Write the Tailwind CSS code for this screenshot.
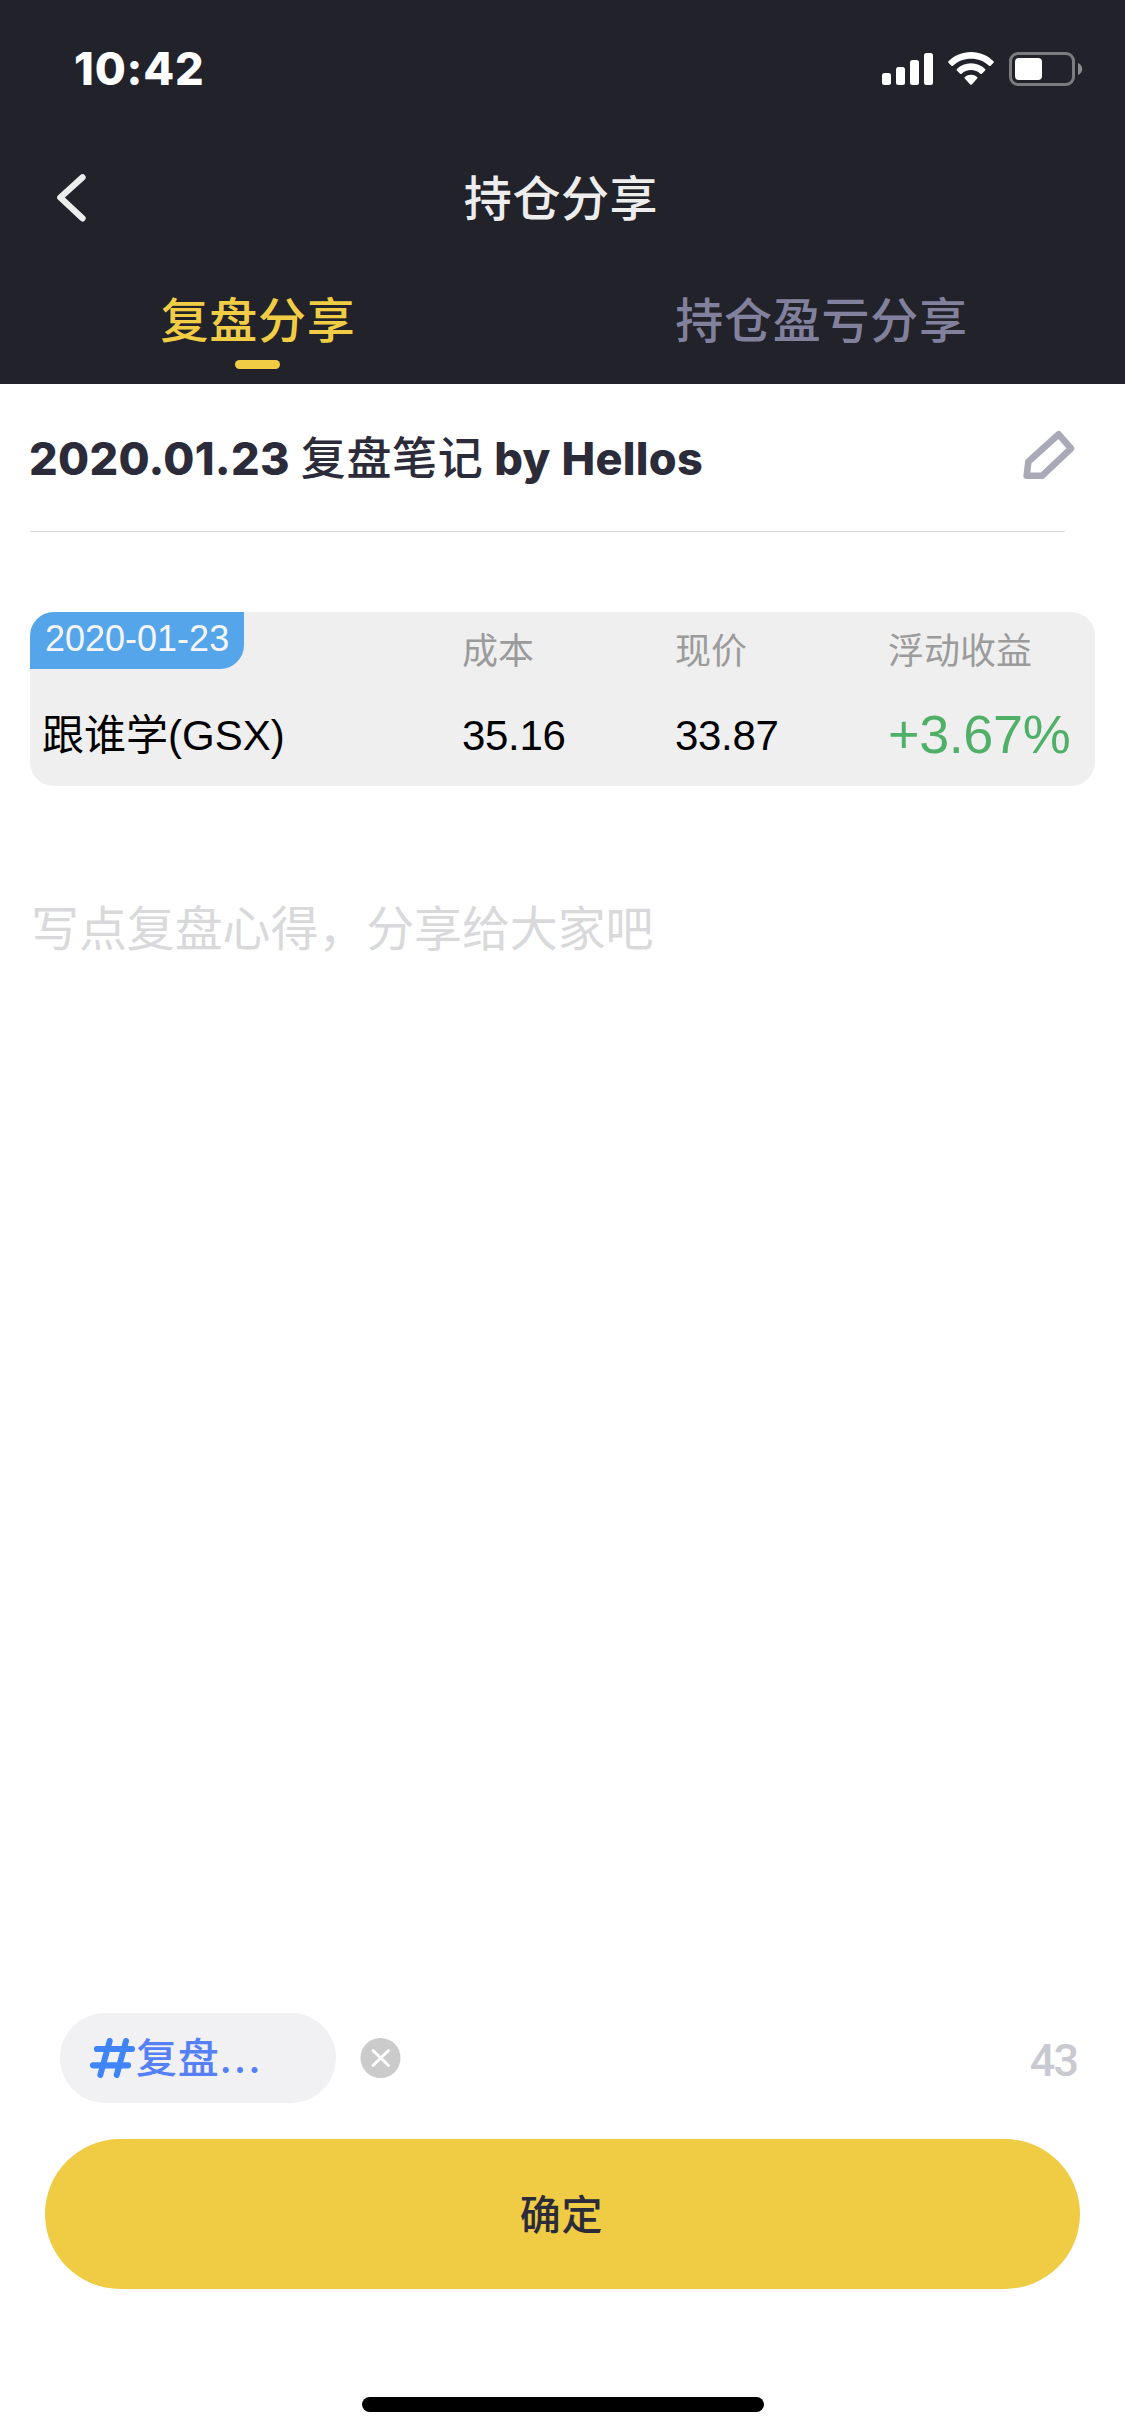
<!DOCTYPE html>
<html lang="zh-CN">
<head>
<meta charset="utf-8">
<title>持仓分享</title>
<script src="https://cdn.jsdelivr.net/npm/@tailwindcss/browser@4"></script>
</head>
<body class="flex h-[2436px] w-[1125px] flex-col overflow-hidden bg-white font-['Inter','Noto_Sans_CJK_SC',sans-serif]">
  <header class="flex h-[384px] flex-col bg-[#22222a]">
    <!-- status bar -->
    <div class="flex h-[132px] items-start justify-between pr-[42px] pl-[74px] pt-[48px]">
      <span class="text-[45px] leading-[42px] font-extrabold tracking-[0.8px] text-white">10:42</span>
      <svg class="h-[42px] w-[201px]" viewBox="882 48 201 42" fill="#fff">
        <rect x="882" y="73" width="9" height="12" rx="2.5"/>
        <rect x="896" y="67" width="9" height="18" rx="2.5"/>
        <rect x="910" y="60" width="9" height="25" rx="2.5"/>
        <rect x="924" y="53" width="9" height="32" rx="2.5"/>
        <path d="M971 52c8.800 0 16.700 3.500 22.500 9.200.5.5.5 1.100 0 1.600l-2.900 2.900c-.5.500-1.100.500-1.600 0C984.300 61.300 978 58.700 971 58.700s-13.300 2.600-18 7c-.5.500-1.100.500-1.600 0l-2.900-2.900c-.5-.5-.5-1.100 0-1.600C954.300 55.500 962.200 52 971 52z"/>
        <path d="M971 63.300c5.400 0 10.400 2.100 14.100 5.600.5.500.5 1.100 0 1.600l-3.200 3.200c-.5.500-1.100.5-1.600 0-2.500-2.200-5.700-3.600-9.300-3.600s-6.800 1.400-9.300 3.600c-.5.500-1.100.5-1.600 0l-3.200-3.200c-.5-.5-.5-1.100 0-1.600 3.700-3.500 8.700-5.600 14.100-5.600z"/>
        <path d="M971 74.700c2.300 0 4.400.800 6.100 2.200.5.400.5 1 .1 1.500l-5.400 6c-.5.500-1.100.5-1.600 0l-5.400-6c-.4-.5-.4-1.100.1-1.500 1.700-1.400 3.800-2.200 6.100-2.200z"/>
        <rect x="1010.500" y="53.500" width="63" height="31" rx="7.500" fill="none" stroke="#7c7c80" stroke-width="3"/>
        <rect x="1015" y="58" width="27" height="22" rx="4"/>
        <path d="M1078 63c2.700 1.100 4.300 3.500 4.300 6s-1.600 4.900-4.300 6z" fill="#8b8b8f"/>
      </svg>
    </div>
    <!-- navigation bar -->
    <div class="grid h-[132px] grid-cols-3 items-center">
      <svg class="ml-[54px] h-[54px] w-[36px]" viewBox="54 171 36 54" fill="none" stroke="#ededed" stroke-width="6.300" stroke-linecap="round" stroke-linejoin="round"><path d="M82.500 177.300L60.300 197.500L82.500 218.300"/></svg>
      <h1 class="pt-[2px] pr-[3px] text-center text-[48px] leading-[66px] font-medium tracking-[0.6px] text-[#ededed]">持仓分享</h1>
    </div>
    <!-- tabs -->
    <nav class="flex h-[120px] text-[48px] leading-[66px] font-medium tracking-[0.75px]">
      <div class="flex w-[515px] flex-col items-center pt-[24px] text-[#f0cd45]">
        <span class="pl-px">复盘分享</span>
        <span class="mt-[6px] h-[9px] w-[45px] rounded-full bg-[#f0cd45]"></span>
      </div>
      <div class="flex w-[610px] justify-center pt-[24px] pl-[3px] text-[#82819d]"><span>持仓盈亏分享</span></div>
    </nav>
  </header>

  <main class="flex flex-1 flex-col px-[30px]">
    <div class="mr-[30px] flex h-[148px] items-start border-b border-[#dadada] text-[#2b2b3a]">
      <h2 class="-ml-px pt-[42px] text-[45px] leading-[66px] font-extrabold tracking-[0.3px] [word-spacing:0.8px] whitespace-nowrap">2020.01.23 <span class="font-medium tracking-[0.6px]">复盘笔记</span> by Hellos</h2>
      <svg class="mt-[44px] -mr-[12px] ml-auto h-[54px] w-[57px] shrink-0" viewBox="1020 428 57 54" fill="none" stroke="#a9aab8" stroke-width="6.600" stroke-linejoin="round"><path d="M1058.700 434.300L1071 448.500L1042 475.800H1026.700L1028.300 461.800Z"/></svg>
    </div>

    <section class="mt-[80px] grid h-[174px] w-[1065px] grid-cols-[432px_213px_213px_207px] grid-rows-[76px_98px] overflow-hidden rounded-[24px] bg-[#efefef] font-['Liberation_Sans','Noto_Sans_CJK_SC',sans-serif]">
      <span class="h-[57px] w-[214px] rounded-br-[24px] bg-[#54a5ea] pl-[15px] text-[36px] leading-[53px] text-[#f6f6f6]">2020-01-23</span>
      <span class="text-[36px] leading-[80px] text-[#9b9b9b]">成本</span>
      <span class="text-[36px] leading-[80px] text-[#9b9b9b]">现价</span>
      <span class="text-[36px] leading-[80px] text-[#9b9b9b]">浮动收益</span>
      <span class="pl-[12px] text-[42px] leading-[96px] text-black">跟谁学(GSX)</span>
      <span class="text-[42px] leading-[96px] tracking-[-0.3px] text-black">35.16</span>
      <span class="text-[42px] leading-[96px] tracking-[-0.3px] text-black">33.87</span>
      <span class="text-[54px] leading-[92px] tracking-[-0.4px] text-[#50b068]">+3.67%</span>
    </section>

    <p class="mt-[110px] ml-px text-[48px] leading-[66px] tracking-[-0.12px] text-[#d9d9dc]">写点复盘心得，分享给大家吧</p>
  </main>

  <footer class="flex flex-col px-[45px]">
    <div class="flex h-[90px] items-center pl-[15px]">
      <div class="flex h-[90px] w-[276px] items-center rounded-full bg-[#f1f1f4] pl-[30px]">
        <svg class="h-[40px] w-[45px] shrink-0" viewBox="90 2038 45 40" fill="none" stroke="#4085f7" stroke-linecap="round"><path stroke-width="6.200" d="M97 2049H132M93 2065.300H128"/><path stroke-width="6" d="M109.700 2041L100.300 2075M126 2041L116.700 2075"/></svg>
        <span class="ml-[1px] text-[41px] leading-[60px] font-medium tracking-[0.7px] text-[#5580f6]">复盘<span class="tracking-[2px]">...</span></span>
      </div>
      <svg class="ml-[24px] size-[41px]" viewBox="0 0 41 41"><circle cx="20.500" cy="20" r="20" fill="#cbcbcb"/><path d="M13 12.500L28.500 27.500M28.500 12.500L13 27.500" stroke="#fff" stroke-width="3" stroke-linecap="round"/></svg>
      <span class="mt-[6px] ml-auto pr-[3px] font-['Roboto',sans-serif] text-[45px] leading-[60px] font-medium tracking-[-2px] text-[#c9c9d1]">43</span>
    </div>
    <button class="mt-[36px] h-[150px] rounded-[75px] bg-[#f0cc45] pt-[2px] pr-[2px] text-[41px] leading-[60px] font-medium tracking-[0.7px] text-[#2b2b3a]">确定</button>
    <div class="mt-[108px] mb-[24px] h-[15px] w-[402px] self-center rounded-full bg-black"></div>
  </footer>
</body>
</html>
